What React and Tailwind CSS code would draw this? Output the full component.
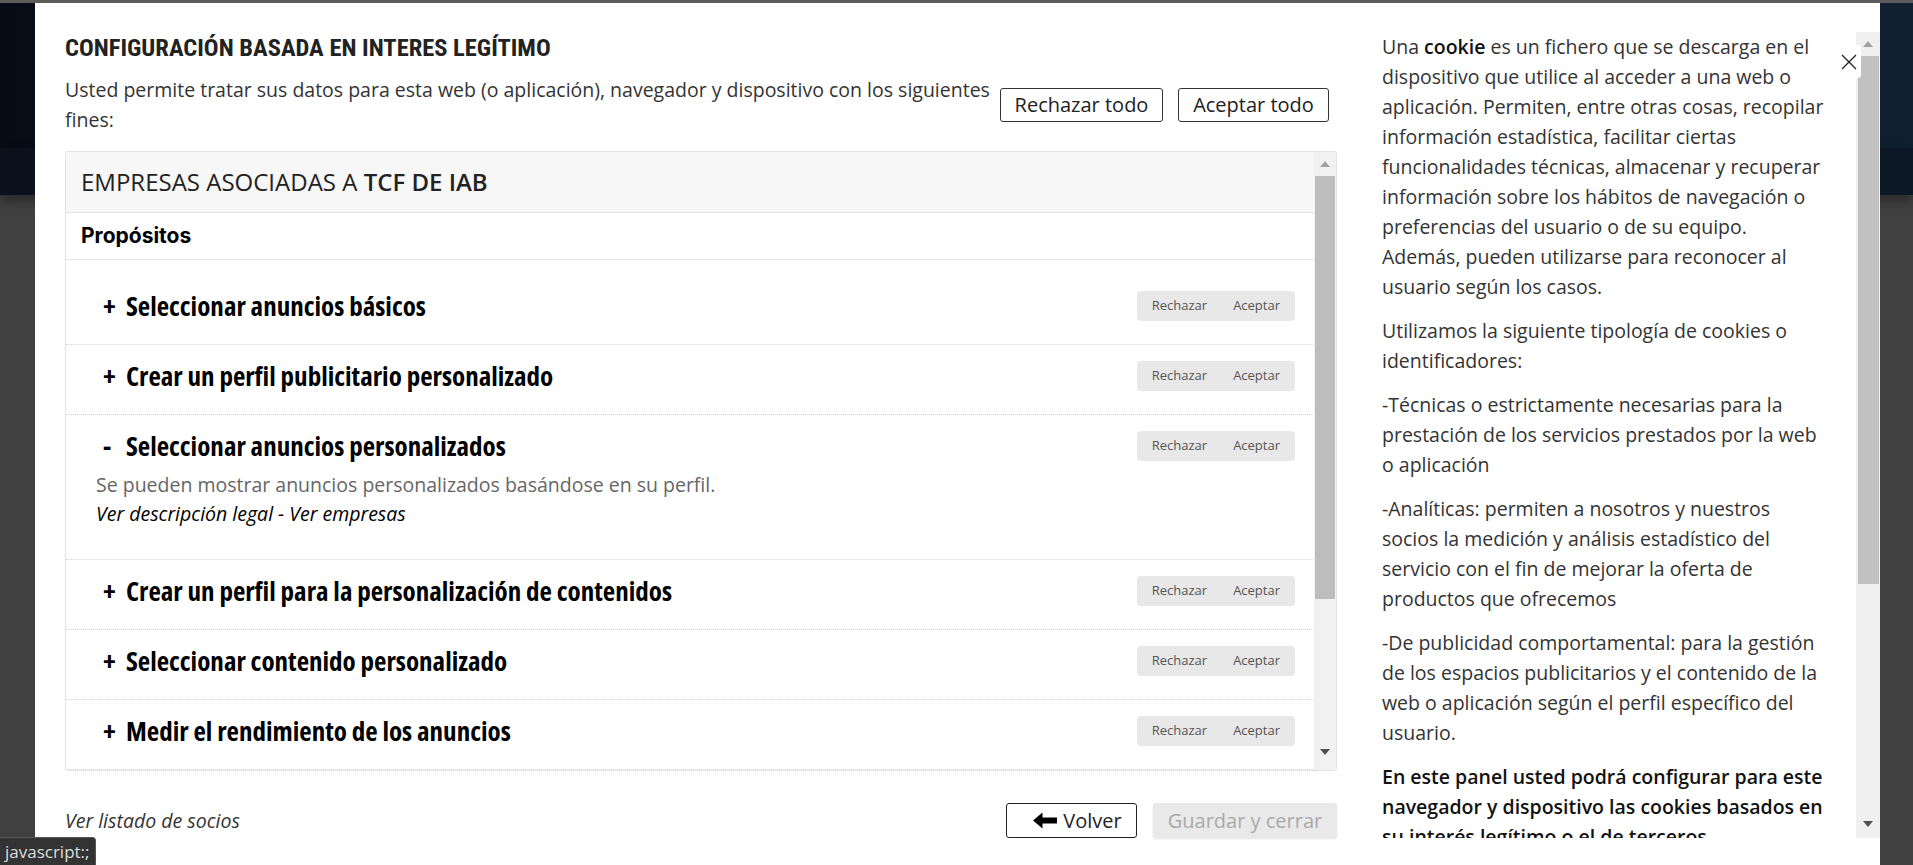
import React from 'react';

const purposes = [
  { title: 'Seleccionar anuncios básicos' },
  { title: 'Crear un perfil publicitario personalizado' },
  {
    title: 'Seleccionar anuncios personalizados',
    open: true,
    desc: 'Se pueden mostrar anuncios personalizados basándose en su perfil.',
  },
  { title: 'Crear un perfil para la personalización de contenidos' },
  { title: 'Seleccionar contenido personalizado' },
  { title: 'Medir el rendimiento de los anuncios' },
];

const ArrowUp = () => (
  <svg width="10" height="6" viewBox="0 0 10 6"><path d="M0 6 L5 0 L10 6 Z" fill="#a3a3a3" /></svg>
);
const ArrowDown = () => (
  <svg width="10" height="6" viewBox="0 0 10 6"><path d="M0 0 L10 0 L5 6 Z" fill="#505050" /></svg>
);

const Pill = () => (
  <div className="flex items-center gap-[26px] h-[30px] px-[15px] rounded-[4px] bg-[#e8e8e8] text-[13px] text-[#555] shrink-0">
    <span>Rechazar</span>
    <span>Aceptar</span>
  </div>
);

const PurposeRow = ({ item }) => (
  <div className={`pl-[37px] pr-[19px] pt-[17px] border-b border-dotted border-[#d6d6d6] ${item.open ? 'pb-[31px]' : 'pb-[24px]'}`}>
    <div className="flex items-center justify-between h-[28px]">
      <div className="flex items-center font-['Open_Sans',sans-serif] font-bold font-stretch-condensed text-[27px] leading-[28px] text-black">
        <span className="w-[23px]">{item.open ? '-' : '+'}</span>
        <span>{item.title}</span>
      </div>
      <Pill />
    </div>
    {item.open && (
      <div className="mt-[10px] -ml-[7px] text-[19.5px] leading-[29px]">
        <p className="text-[#666]">{item.desc}</p>
        <p className="italic text-black">Ver descripción legal - Ver empresas</p>
      </div>
    )}
  </div>
);

export default function App() {
  return (
    <div className="relative w-[1913px] h-[865px] overflow-hidden bg-[#404040] font-['Open_Sans',sans-serif]">
      {/* page behind the overlay */}
      <div className="h-[3px] bg-[#5c5c5c]" />
      <div className="h-[145px] bg-gradient-to-r from-[#070b16] to-[#10202f]" />
      <div className="h-[47px] bg-gradient-to-r from-[#0a101c] to-[#0d1827] shadow-[0_6px_10px_rgba(0,0,0,0.35)]" />

      {/* modal */}
      <div className="absolute left-[35px] top-[3px] w-[1845px] h-[862px] bg-white flex pl-[30px]">
        {/* left column */}
        <div className="w-[1272px] pt-[33px] flex flex-col">
          <h2 className="font-['Roboto',sans-serif] font-bold font-stretch-condensed text-[24.5px] leading-[24px] text-[#222] uppercase">
            CONFIGURACIÓN BASADA EN INTERES LEGÍTIMO
          </h2>
          <div className="mt-[15px] flex items-start justify-between">
            <p className="w-[935px] text-[19.5px] leading-[30px] text-[#333]">
              Usted permite tratar sus datos para esta web (o aplicación), navegador y dispositivo con los siguientes fines:
            </p>
            <div className="flex shrink-0 gap-[15px] mt-[13px] mr-[8px]">
              <button type="button" className="h-[34px] w-[163px] border border-[#333] rounded-[3px] text-[20px] text-[#222]">Rechazar todo</button>
              <button type="button" className="h-[34px] w-[151px] border border-[#333] rounded-[3px] text-[20px] text-[#222]">Aceptar todo</button>
            </div>
          </div>

          <div className="mt-[16px] h-[620px] flex border border-[#e3e3e3] rounded-[3px] overflow-hidden">
            <div className="flex-1 flex flex-col overflow-hidden">
              <div className="h-[61px] shrink-0 bg-[#f7f7f7] border-b border-[#e3e3e3] px-[15px] flex items-center text-[24px] text-[#222]">
                <span>EMPRESAS ASOCIADAS A&nbsp;</span>
                <span className="font-semibold">TCF DE IAB</span>
              </div>
              <div className="h-[47px] shrink-0 border-b border-[#e3e3e3] px-[15px] flex items-center font-['Inter',sans-serif] font-bold text-[21px] text-black">
                Propósitos
              </div>
              <div className="pt-[15px]">
                {purposes.map((p) => (
                  <PurposeRow key={p.title} item={p} />
                ))}
              </div>
            </div>
            <div className="w-[22px] shrink-0 bg-[#f1f1f1] flex flex-col items-center">
              <div className="h-[24px] flex items-center justify-center"><ArrowUp /></div>
              <div className="w-[20px] h-[423px] bg-[#bdbdbd]" />
              <div className="flex-1" />
              <div className="h-[24px] flex items-center justify-center mb-[6px]"><ArrowDown /></div>
            </div>
          </div>

          <div className="mt-[32px] flex items-center justify-between">
            <span className="italic text-[19.5px] text-[#333]">Ver listado de socios</span>
            <div className="flex gap-[16px]">
              <button type="button" className="h-[35px] w-[131px] pl-[12px] border border-[#222] rounded-[3px] flex items-center justify-center gap-[6px] text-[20px] text-[#222]">
                <svg width="24" height="17" viewBox="0 0 24 17"><path d="M0 8.5 L9.5 0.5 V5.5 H24 V11.5 H9.5 V16.5 Z" fill="#000" /></svg>
                Volver
              </button>
              <button type="button" className="h-[35px] w-[184px] rounded-[3px] bg-[#e9e9e9] shadow-[0_1px_2px_rgba(0,0,0,0.12)] text-[20px] text-[#a9a9a9]">
                Guardar y cerrar
              </button>
            </div>
          </div>
        </div>

        {/* right column */}
        <div className="flex-1 ml-[45px] mt-[29px] h-[806px] flex overflow-hidden">
          <div className="w-[444px] text-[19.5px] leading-[30px] text-[#333] space-y-[14px]">
            <p>Una <span className="font-semibold text-[#111]">cookie</span> es un fichero que se descarga en el dispositivo que utilice al acceder a una web o aplicación. Permiten, entre otras cosas, recopilar información estadística, facilitar ciertas funcionalidades técnicas, almacenar y recuperar información sobre los hábitos de navegación o preferencias del usuario o de su equipo. Además, pueden utilizarse para reconocer al usuario según los casos.</p>
            <p>Utilizamos la siguiente tipología de cookies o identificadores:</p>
            <p>-Técnicas o estrictamente necesarias para la prestación de los servicios prestados por la web o aplicación</p>
            <p>-Analíticas: permiten a nosotros y nuestros socios la medición y análisis estadístico del servicio con el fin de mejorar la oferta de productos que ofrecemos</p>
            <p>-De publicidad comportamental: para la gestión de los espacios publicitarios y el contenido de la web o aplicación según el perfil específico del usuario.</p>
            <p className="font-semibold text-[#111]">En este panel usted podrá configurar para este navegador y dispositivo las cookies basados en su interés legítimo o el de terceros.</p>
          </div>
          <div className="ml-auto w-[24px] shrink-0 bg-[#f0f0f0] flex flex-col items-center">
            <div className="h-[24px] flex items-center justify-center"><ArrowUp /></div>
            <div className="w-[21px] h-[528px] bg-[#c1c1c1]" />
            <div className="flex-1" />
            <div className="h-[24px] flex items-center justify-center mb-[2px]"><ArrowDown /></div>
          </div>
        </div>

        {/* close button */}
        <button type="button" className="absolute top-[42px] right-[19px] w-[25px] h-[33px] bg-white rounded-[3px] flex items-center justify-center">
          <svg width="16" height="16" viewBox="0 0 16 16"><path d="M1 1 L15 15 M15 1 L1 15" stroke="#222" strokeWidth="1.3" /></svg>
        </button>
      </div>

      {/* browser status bubble */}
      <div className="absolute left-0 bottom-0 h-[28px] px-[5px] flex items-center bg-[#333] border-t border-r border-[#555] rounded-tr-[4px] text-[17px] text-[#ddd]">
        javascript:;
      </div>
    </div>
  );
}
